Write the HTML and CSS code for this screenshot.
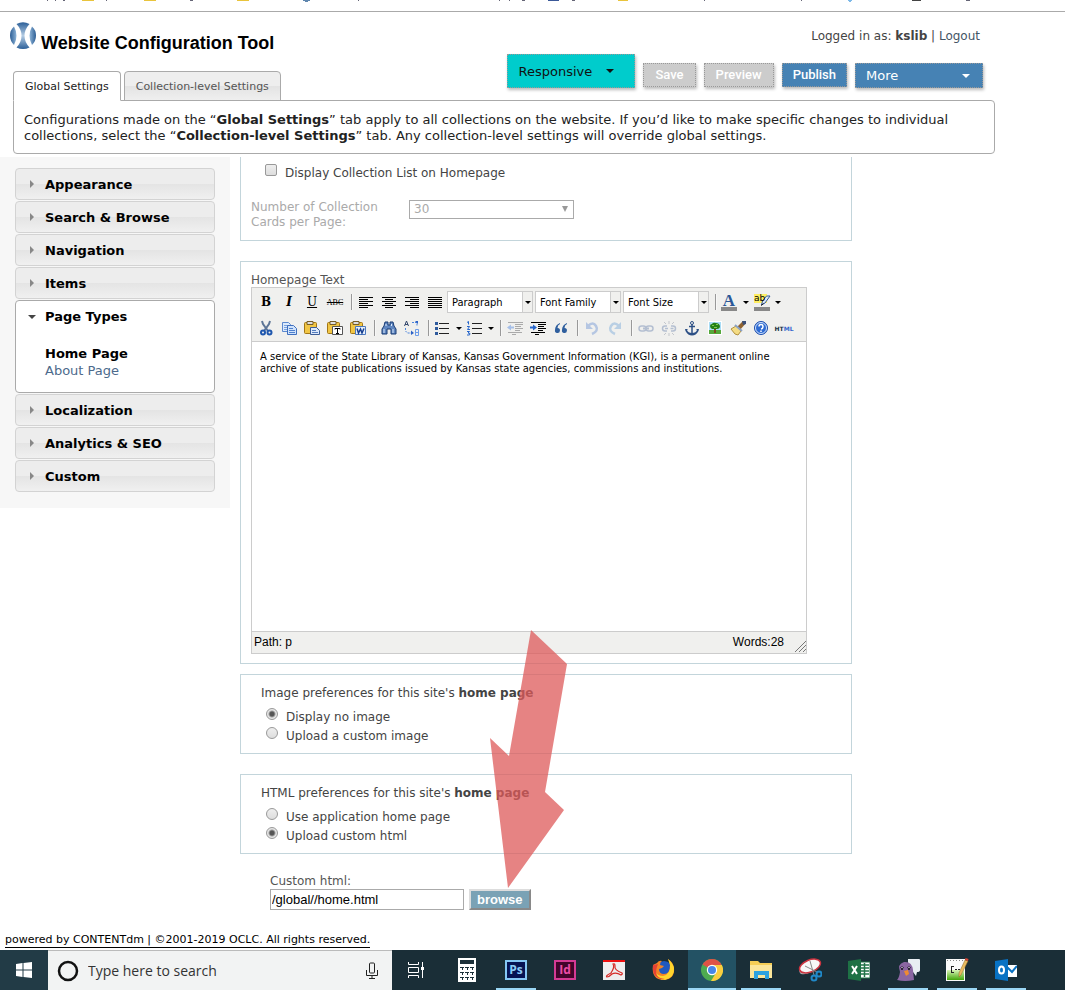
FILE: index.html
```html
<!DOCTYPE html>
<html lang="en">
<head>
<meta charset="utf-8">
<title>Website Configuration Tool</title>
<link rel="stylesheet" href="styles.css">
</head>
<body>
<div class="bookmarks">
  <svg width="1065" height="2" aria-hidden="true">
    <path d="M47 0h1v1h-1zM55 0h1v1h-1zM63 0h2v1h-2zM106 0h1v1h-1zM190 0h3v1h-3zM358 0h1v1h-1zM499 0h1v1h-1zM509 0h1v1h-1zM522 0h3v1h-3zM572 0h3v1h-3zM704 0h1v1h-1zM801 0h1v1h-1zM966 0h4v1h-4z" fill="#667"/>
    <path d="M82 0h12v1h-12zM144 0h12v1h-12zM237 0h12v1h-12zM618 0h10v1h-10z" fill="#e9c43c"/>
    <path d="M303 0h7v1h-2v1h-3v-1h-2z" fill="#5f86ae"/>
    <path d="M548 0h11v1h-11z" fill="#3b5998"/>
    <path d="M848 0h4v1h-1v1h-2v-1h-1z" fill="#7db9e8"/>
    <path d="M912 0h9v1h-9z" fill="#444"/>
  </svg>
</div>

<header class="header">
  <div class="brand-col">
    <div class="brand">
      <svg class="logo" width="26" height="28" viewBox="0 0 26 28" aria-hidden="true">
        <defs><linearGradient id="lg" x1="0" x2="1"><stop offset="0" stop-color="#2c5d94"/><stop offset="1" stop-color="#8db4d8"/></linearGradient>
        <linearGradient id="lg2" x1="1" x2="0"><stop offset="0" stop-color="#2c5d94"/><stop offset="1" stop-color="#8db4d8"/></linearGradient>
        <linearGradient id="lg3" x1="0" x2="0" y1="0" y2="1"><stop offset="0" stop-color="#2c6099"/><stop offset=".5" stop-color="#b5cde4"/><stop offset="1" stop-color="#2c6099"/></linearGradient></defs>
        <path d="M4 4.500Q0 8 0 13.500T4 23Q6.500 18.500 6.500 13.700T4 4.500z" fill="url(#lg)"/>
        <path d="M22 4.500Q26 8 26 13.500T22 23Q19.500 18.500 19.500 13.700T22 4.500z" fill="url(#lg2)"/>
        <path d="M6.500 2Q13-1.300 19.500 2Q14.500 7.500 14.500 13.700T19.500 25.500Q13 28.500 6.500 25.500Q11.500 20 11.500 13.700T6.500 2z" fill="url(#lg3)"/>
      </svg>
      <h1 class="title">Website Configuration Tool</h1>
    </div>
    <nav class="tabs">
      <a class="tab tab-active" href="#global">Global Settings</a>
      <a class="tab" href="#collection">Collection-level Settings</a>
    </nav>
  </div>
  <div class="tools">
    <div class="login">Logged in as: <b>kslib</b> | <a href="#logout">Logout</a></div>
    <div class="actions">
      <button class="menu-btn menu-theme" type="button">Responsive<i class="caret"></i></button>
      <button class="act" type="button" disabled>Save</button>
      <button class="act" type="button" disabled>Preview</button>
      <button class="act act-on" type="button">Publish</button>
      <button class="menu-btn menu-more" type="button">More<i class="caret"></i></button>
    </div>
  </div>
</header>
<p class="notice">Configurations made on the “<b>Global Settings</b>” tab apply to all collections on the website. If you’d like to make specific changes to individual collections, select the “<b>Collection-level Settings</b>” tab. Any collection-level settings will override global settings.</p>

<div class="columns">
  <nav class="side">
    <a class="acc" href="#appearance">Appearance</a>
    <a class="acc" href="#search">Search &amp; Browse</a>
    <a class="acc" href="#navigation">Navigation</a>
    <a class="acc" href="#items">Items</a>
    <div class="acc-open">
      <a class="acc-head" href="#types">Page Types</a>
      <a class="sub sub-current" href="#home">Home Page</a>
      <a class="sub" href="#about">About Page</a>
    </div>
    <a class="acc" href="#localization">Localization</a>
    <a class="acc" href="#analytics">Analytics &amp; SEO</a>
    <a class="acc" href="#custom">Custom</a>
  </nav>

  <main class="content">
    <section class="box box-list">
      <label class="choice"><input class="check" type="checkbox"><span>Display Collection List on Homepage</span></label>
      <div class="cards">
        <label class="cards-label" for="cards">Number of Collection Cards per Page:</label>
        <span class="cards-wrap"><select class="cards-select" id="cards" disabled><option>30</option></select></span>
      </div>
    </section>

    <section class="box box-editor">
      <label class="box-label" for="hometext">Homepage Text</label>
      <div class="editor">
        <div class="toolbar">
          <div class="row">
            <button class="tb serif tb-b" type="button">B</button>
            <button class="tb serif tb-i" type="button">I</button>
            <button class="tb serif tb-u" type="button">U</button>
            <button class="tb serif tb-s" type="button">ABC</button>
            <i class="sep"></i>
            <button class="tb" type="button" aria-label="Align left"><svg width="16" height="16"><path d="M1 3.500h14M1 5.500h9M1 7.500h14M1 9.500h9M1 11.500h14M1 13.500h9" stroke="#000"/></svg></button>
            <button class="tb" type="button" aria-label="Align center"><svg width="16" height="16"><path d="M1 3.500h14M4 5.500h8M1 7.500h14M4 9.500h8M1 11.500h14M4 13.500h8" stroke="#000"/></svg></button>
            <button class="tb" type="button" aria-label="Align right"><svg width="16" height="16"><path d="M1 3.500h14M6 5.500h9M1 7.500h14M6 9.500h9M1 11.500h14M6 13.500h9" stroke="#000"/></svg></button>
            <button class="tb" type="button" aria-label="Justify"><svg width="16" height="16"><path d="M1 3.500h14M1 5.500h14M1 7.500h14M1 9.500h14M1 11.500h14M1 13.500h14" stroke="#000"/></svg></button>
            <span class="pick"><select aria-label="Format"><option>Paragraph</option></select></span>
            <span class="pick"><select aria-label="Font family"><option>Font Family</option></select></span>
            <span class="pick"><select aria-label="Font size"><option>Font Size</option></select></span>
            <i class="sep"></i>
            <button class="tb split serif tb-color" type="button" aria-label="Text color"><span>A</span></button>
            <button class="tb split" type="button" aria-label="Highlight color"><svg width="18" height="20"><path d="M1 2h13v9H1z" fill="#ffee62"/><path d="M8.500 13l1-4 4-5h3.500l-5 7z" fill="#dfe8f5" stroke="#345a9a"/><path d="M8 13.500l2.500-2" stroke="#111"/><path d="M1 15h16v4H1z" fill="#888"/><text x="1" y="9" font-family="DejaVu Sans" font-size="9" fill="#000">ab</text></svg></button>
          </div>
          <div class="row">
            <button class="tb" type="button" aria-label="Cut"><svg width="16" height="16"><path d="M4 1l1 3 5 7M12 1l-1 3-5 7" stroke="#5d7596" stroke-width="2" fill="none"/><circle cx="5" cy="12.500" r="2" fill="none" stroke="#1f57ae" stroke-width="2"/><circle cx="11.500" cy="12.500" r="2" fill="none" stroke="#1f57ae" stroke-width="2"/></svg></button>
            <button class="tb" type="button" aria-label="Copy"><svg width="16" height="16"><path d="M1.500 2.500h6l2 2v7h-8z" fill="#dceafb" stroke="#5b88cf"/><path d="M3 5.500h4M3 7.500h4M3 9.500h4" stroke="#7aa2df"/><path d="M6.500 5.500h6l3 3v6h-9z" fill="#cfe2fb" stroke="#3f6fbe"/><path d="M8 8.500h4M8 10.500h6M8 12.500h6" stroke="#4f80cd"/></svg></button>
            <button class="tb" type="button" aria-label="Paste"><svg width="16" height="16"><rect x=".5" y="2.500" width="12" height="11" rx="1" fill="#f1c645" stroke="#a27616"/><path d="M3 1.500h6v3H3z" fill="#ddd" stroke="#775d26"/><path d="M6.500 7.500h6l3 3v4h-9z" fill="#dce9fb" stroke="#3c5d97"/><path d="M8 10.500h4M8 12.500h6" stroke="#557dbe"/></svg></button>
            <button class="tb" type="button" aria-label="Paste as text"><svg width="16" height="16"><rect x=".5" y="2.500" width="12" height="11" rx="1" fill="#f1c645" stroke="#a27616"/><path d="M3 1.500h6v3H3z" fill="#ddd" stroke="#775d26"/><path d="M5.500 6.500h10v8h-10z" fill="#fff" stroke="#555"/><path d="M8 9.500V8.500h5v1M10.500 8.500v5M9 13.500h3" stroke="#000" fill="none"/></svg></button>
            <button class="tb" type="button" aria-label="Paste from Word"><svg width="16" height="16"><rect x=".5" y="2.500" width="12" height="11" rx="1" fill="#f1c645" stroke="#a27616"/><path d="M3 1.500h6v3H3z" fill="#ddd" stroke="#775d26"/><path d="M5.500 6.500h10v8h-10z" fill="#e6effb" stroke="#4c79bd"/><path d="M7 8.500l1.500 4.500 2-4 1.500 4 2-4.500" stroke="#173f91" stroke-width="1.500" fill="none"/></svg></button>
            <i class="sep"></i>
            <button class="tb" type="button" aria-label="Find"><svg width="16" height="16"><path d="M4 2h3v3h2V2h3l1 4 2 3v5h-5V9H6v5H1V9l2-3z" fill="#5f86c0" stroke="#183a73"/><path d="M3 9v4M12 9v4M5 4v2M10.500 4v2" stroke="#dbe8fa"/></svg></button>
            <button class="tb" type="button" aria-label="Replace"><svg width="18" height="16"><path d="M1.500 6l2-5 2 5M2 4.500h3" stroke="#34486d" fill="none"/><path d="M2.500 8v3l2 2h4M9 2.500h5v4" stroke="#4e86dd" fill="none" stroke-dasharray="2 1"/><path d="M8 10.500l3 2.500-3 2zM12 1h3v3z" fill="#2c62c6"/><path d="M12.500 9.500h3v6h-3zM12.500 12.500h3" stroke="#6d9ce8" fill="none"/></svg></button>
            <i class="sep"></i>
            <button class="tb split" type="button" aria-label="Bulleted list"><svg width="16" height="16"><path d="M5 3.500h10M5 8.500h10M5 13.500h10" stroke="#222"/><path d="M1 2h3v3H1zM1 7h3v3H1zM1 12h3v3H1z" fill="#2e5a9c"/></svg></button>
            <button class="tb split" type="button" aria-label="Numbered list"><svg width="16" height="16"><path d="M6 3.500h10M6 8.500h10M6 13.500h10" stroke="#222"/><path d="M1 2.500l1.500-1v3M1 6.500h2.500l-2 3H4M1 11.500h2.500l-1.500 1.500 2 .5-.5 1.500H1" stroke="#2766cb" fill="none"/></svg></button>
            <i class="sep"></i>
            <button class="tb" type="button" aria-label="Outdent" disabled><svg width="16" height="16"><path d="M1 2.500h15M8 4.500h8M8 6.500h6M8 8.500h8M8 10.500h5M1 12.500h14M5 14.500h4" stroke="#aaa"/><path d="M0 7.500l4-3v2h3v2H4v2z" fill="#a6bfe8"/></svg></button>
            <button class="tb" type="button" aria-label="Indent"><svg width="16" height="16"><path d="M1 2.500h15M8 4.500h8M8 6.500h6M8 8.500h8M8 10.500h5M1 12.500h14M5 14.500h4" stroke="#000"/><path d="M7 7.500l-4-3v2H0v2h3v2z" fill="#2766cb"/></svg></button>
            <button class="tb" type="button" aria-label="Blockquote"><svg width="16" height="16"><path d="M7 3Q2 5 2 10a2.500 2.500 0 1 0 2.500-2Q4.500 5 7 4zM14 3Q9 5 9 10a2.500 2.500 0 1 0 2.500-2Q11.500 5 14 4z" fill="#2f5f9e"/></svg></button>
            <i class="sep"></i>
            <button class="tb" type="button" aria-label="Undo" disabled><svg width="16" height="16"><path d="M4 6Q9 1 12 6T8 14" stroke="#b5c6e2" stroke-width="2.500" fill="none"/><path d="M2 2v7h7z" fill="#b5c6e2"/></svg></button>
            <button class="tb" type="button" aria-label="Redo" disabled><svg width="16" height="16"><path d="M12 6Q7 1 4 6T8 14" stroke="#b9cfe4" stroke-width="2.500" fill="none"/><path d="M14 2v7H7z" fill="#b9cfe4"/></svg></button>
            <i class="sep"></i>
            <button class="tb" type="button" aria-label="Link" disabled><svg width="16" height="16"><rect x="1" y="6" width="7" height="5" rx="2.500" fill="none" stroke="#b4bfd1" stroke-width="1.500"/><rect x="8" y="6" width="7" height="5" rx="2.500" fill="none" stroke="#b4bfd1" stroke-width="1.500"/><path d="M5 8.500h6" stroke="#b4bfd1" stroke-width="2"/></svg></button>
            <button class="tb" type="button" aria-label="Unlink" disabled><svg width="16" height="16"><path d="M6 6H4a2.500 2.500 0 0 0 0 5h2M10 6h2a2.500 2.500 0 0 1 0 5h-2M4 8.500h3M9.500 8.500h3" stroke="#b4bfd1" stroke-width="1.500" fill="none"/><path d="M3 2l2 2M8 1v3M13 2l-2 2M3 15l2-2M8 16v-3M13 15l-2-2" stroke="#c3c6cc"/></svg></button>
            <button class="tb" type="button" aria-label="Anchor"><svg width="16" height="16"><circle cx="8" cy="3" r="1.500" fill="none" stroke="#2c4f85"/><path d="M8 4v10M5 6.500h6" stroke="#2c4f85" stroke-width="1.500"/><path d="M1 9l3 0-1 1q1 3 5 3t5-3l-1-1h3l-.5 2Q12 15.500 8 15.500T1.500 11z" fill="#2c4f85"/></svg></button>
            <button class="tb" type="button" aria-label="Image"><svg width="16" height="16"><path d="M1 1h14v14H1z" fill="#fff"/><path d="M2 2h12v9H2z" fill="#a9dcf5"/><path d="M2 10h12v4H2z" fill="#55a83b"/><path d="M7 8h2v5H7z" fill="#7c4a1d"/><path d="M3 6q0-2 2-2 1-2 4-1 3 0 4 3 0 3-3 3H5Q3 8 3 6z" fill="#238117"/><path d="M5 5h2v1H5zM9 4h2v1H9zM7 7h3v1H7z" fill="#82ca4a"/></svg></button>
            <button class="tb" type="button" aria-label="Cleanup"><svg width="16" height="16"><path d="M13 1l3 2-6 7-3-3z" fill="#8f6330"/><path d="M12 1h4v3l-3 1z" fill="#394f78"/><path d="M6 6l5 5-3 4-3-1-4-5z" fill="#f4dc84" stroke="#b2913e"/><path d="M5 5l7 6" stroke="#8aa1c4" stroke-width="2"/></svg></button>
            <button class="tb" type="button" aria-label="Help"><svg width="16" height="16"><circle cx="8" cy="8" r="6.500" fill="#2e6bd3" stroke="#1f4fac"/><circle cx="8" cy="8" r="5.500" fill="none" stroke="#cfe0fa"/><path d="M6 6.500Q6 4.500 8 4.500t2 2T8 9M8 10.500V12" stroke="#fff" stroke-width="1.500" fill="none"/></svg></button>
            <button class="tb tb-html" type="button">HT<span>ML</span></button>
          </div>
        </div>
        <textarea class="editor-text" id="hometext">A service of the State Library of Kansas, Kansas Government Information (KGI), is a permanent online archive of state publications issued by Kansas state agencies, commissions and institutions.</textarea>
        <div class="status"><span>Path: p</span><span class="words">Words:28</span><svg width="12" height="12" aria-hidden="true"><path d="M1 12L12 1M5 12l7-7M9 12l3-3" stroke="#777"/></svg></div>
      </div>
    </section>

    <section class="box box-pref">
      <p class="pref-title">Image preferences for this site's <b>home page</b></p>
      <label class="choice"><input class="radio" type="radio" name="img" checked><span>Display no image</span></label>
      <label class="choice"><input class="radio" type="radio" name="img"><span>Upload a custom image</span></label>
    </section>
    <section class="box box-pref box-html">
      <p class="pref-title">HTML preferences for this site's <b>home page</b></p>
      <label class="choice"><input class="radio" type="radio" name="html"><span>Use application home page</span></label>
      <label class="choice"><input class="radio" type="radio" name="html" checked><span>Upload custom html</span></label>
    </section>
    <div class="upload">
      <label for="path">Custom html:</label>
      <div class="upload-row"><input class="path" id="path" type="text" value="/global//home.html"><button class="browse" type="button">browse</button></div>
    </div>
    <svg class="arrow" width="78" height="258" viewBox="0 0 78 258" aria-hidden="true"><path d="M41 0L77 34 55 162 74 180 18 258 0 108 19 126z" fill="#de5a5a" fill-opacity=".75"/></svg>
  </main>
</div>

<footer class="foot"><a href="#contentdm">powered by CONTENTdm | ©2001-2019 OCLC. All rights reserved.</a></footer>

<div class="taskbar">
  <button class="start" type="button" aria-label="Start"><svg width="16" height="16"><path d="M0 2l6.500-1v6.500H0zM7.500 1L16 0v7.500H7.500zM0 8.500h6.500V15L0 14zM7.500 8.500H16V16l-8.500-1z" fill="#fff"/></svg></button>
  <div class="search">
    <svg width="22" height="22"><circle cx="11" cy="11" r="9" fill="none" stroke="#111" stroke-width="2.500"/></svg>
    <input class="search-text" type="text" placeholder="Type here to search" aria-label="Type here to search">
    <svg width="12" height="17"><rect x="3.500" y="1" width="5" height="10" rx="1" fill="none" stroke="#222"/><path d="M.5 8v5.500h11V8M6 13.500v3M3 16.500h6" stroke="#222" fill="none"/></svg>
  </div>
  <button class="app app-view" type="button" aria-label="Task view"><svg width="18" height="16"><path d="M1.500 0v2.500h10V0M1.500 16v-2.500h10V16M1.500 5.500h10v5h-10zM15.500 0v16" stroke="#fff" fill="none"/><path d="M14 5h3v3h-3z" fill="#fff"/></svg></button>
  <button class="app" type="button" aria-label="Calculator"><svg width="18" height="24"><path d="M0 0h18v24H0z" fill="#fff"/><path d="M2 2h14v4H2z" fill="#1b3039"/><path d="M2 9h4v1H5v2H4v-2H2zM7 9h4v1h-1v2H9v-2H7zM12 9h4v1h-1v2h-1v-2h-2zM2 14h4v1H5v2H4v-2H2zM7 14h4v1h-1v2H9v-2H7zM12 14h4v1h-1v2h-1v-2h-2zM2 19h4v1H5v2H4v-2H2zM7 19h4v1h-1v2H9v-2H7zM12 19h4v1h-1v2h-1v-2h-2z" fill="#1b3039"/></svg></button>
  <button class="app app-run" type="button" aria-label="Photoshop"><svg width="22" height="20"><path d="M1 1h20v18H1z" fill="#061353" stroke="#85c7f4" stroke-width="2"/><text x="11" y="14" text-anchor="middle" font-family="Open Sans" font-weight="700" font-size="12" fill="#8bcbf7">Ps</text></svg></button>
  <button class="app" type="button" aria-label="InDesign"><svg width="22" height="20"><path d="M1 1h20v18H1z" fill="#43042b" stroke="#d53a94" stroke-width="2"/><text x="11" y="14" text-anchor="middle" font-family="Open Sans" font-weight="700" font-size="12" fill="#ed4ba6">Id</text></svg></button>
  <button class="app" type="button" aria-label="Acrobat"><svg width="22" height="20"><path d="M0 0h22v20H0z" fill="#eee"/><path d="M0 0h22v2H0z" fill="#ed1010"/><path d="M4 17q-2-1 4-4 4-6 2-9 2-1 2 2-1 4 7 7 1 1-1 2-5-3-9-1-3 3-5 3z" fill="none" stroke="#d52b27" stroke-width="1.200"/></svg></button>
  <button class="app" type="button" aria-label="Firefox"><svg width="24" height="24"><circle cx="13" cy="12" r="9" fill="#2159bf"/><path d="M2 7q-2 15 11 15 11-1 10-12-1-6-6-9 2 3 2 6 0 9-6 9-5 0-5-5l3-1 2-2-4-1q0-3 2-4-3-1-5 2z" fill="#f38426"/><path d="M17 1q1 3 2 6 1 9-7 11-5 0-8-4 2 8 10 8 10-3 9-12-1-5-6-9z" fill="#ffd52d"/><path d="M2 7q-1 9 4 12 3 3 8 2-13-1-7-15z" fill="#e64135"/></svg></button>
  <button class="app app-active" type="button" aria-label="Chrome"><svg width="22" height="22"><circle cx="11" cy="11" r="11" fill="#4eaa50"/><path d="M11 11L1.500 5.500A11 11 0 0 1 20.500 5.500z" fill="#de5246"/><path d="M11 6h9.800A11 11 0 0 1 10 22l5.500-9z" fill="#f9cd3f"/><circle cx="11" cy="11" r="5.200" fill="#fff"/><circle cx="11" cy="11" r="4" fill="#4786e8"/></svg></button>
  <button class="app app-run" type="button" aria-label="File Explorer"><svg width="22" height="20"><path d="M0 1h8l2 2h12v15H0z" fill="#f5cd56"/><path d="M0 5h22v13H0z" fill="#fbe59a"/><path d="M4 11h15v8h-4v-4H8v4H4z" fill="#2da2df"/></svg></button>
  <button class="app" type="button" aria-label="Snipping Tool"><svg width="24" height="24"><path d="M1 10q0 5 2 6 5 1 10-2l7-6V5z" fill="#aaa"/><ellipse cx="12" cy="8" rx="11" ry="6" transform="rotate(-22 12 8)" fill="#f7f7f7" stroke="#cc3440" stroke-width="1.500"/><path d="M12 3l4 14M7 8l12 6" stroke="#888"/><circle cx="16" cy="20" r="2.500" fill="none" stroke="#2089c9" stroke-width="2"/><circle cx="21" cy="16" r="2.500" fill="none" stroke="#2089c9" stroke-width="2"/></svg></button>
  <button class="app" type="button" aria-label="Excel"><svg width="22" height="22"><path d="M10 3h12v16H10z" fill="#fff" stroke="#207347"/><path d="M12 6h9M12 9h9M12 12h9M12 15h9M16.500 4v14" stroke="#207347" stroke-width="1.500"/><path d="M0 2l13-2v22L0 20z" fill="#1e7145"/><path d="M4 7l5 8M9 7l-5 8" stroke="#fff" stroke-width="2"/></svg></button>
  <button class="app app-run" type="button" aria-label="Pidgin"><svg width="24" height="24"><path d="M12 1h11q1 0 1 1v10q0 2-3 2l-1 4-3-4h-5z" fill="#e8edf2"/><path d="M1 22q2-2 3-8-3-8 4-10 8-1 9 8l1 10q-9 2-17 0z" fill="#8a66a2"/><path d="M4 10q2-3 4 0M11 10q2-3 4 0" fill="#ddd" stroke="#35204a"/><circle cx="6" cy="11" r="1" fill="#111"/><circle cx="13" cy="11" r="1" fill="#111"/><path d="M8 13l4-1 1 4-3 2z" fill="#ef8b32"/></svg></button>
  <button class="app app-run" type="button" aria-label="Notepad"><svg width="24" height="24"><defs><linearGradient id="np" x1="0" x2="0" y1="0" y2="1"><stop offset="0" stop-color="#d9f5b8"/><stop offset="1" stop-color="#43a70a"/></linearGradient></defs><path d="M1 1h19v22H1z" fill="#fafafa"/><path d="M2 12h17v10H2z" fill="url(#np)"/><path d="M2 2.500h17" stroke="#888" stroke-dasharray="1 2"/><path d="M6.500 8v7M6 8.500h3M6 14.500h3M10 11.500h2M13 11.500h2" stroke="#222"/><path d="M20 2l3 1-7 14-2 2v-4z" fill="#e9bb60" stroke="#936b2a" stroke-width=".5"/><path d="M20.500 0l3 1-.5 2-3-1z" fill="#d84736"/></svg></button>
  <button class="app app-run" type="button" aria-label="Outlook"><svg width="22" height="22"><path d="M12 6h10v12H12z" fill="#fff"/><path d="M12 8l5 5 5-6" stroke="#0872c4" stroke-width="2" fill="none"/><path d="M0 2l13-2v22L0 20z" fill="#0872c4"/><ellipse cx="6.500" cy="11" rx="2.500" ry="3.500" stroke="#fff" stroke-width="2" fill="none"/></svg></button>
</div>
</body>
</html>
```
FILE: styles.css
```css
* { box-sizing: border-box; }
body {
  margin: 0;
  min-height: 100vh;
  display: flex;
  flex-direction: column;
  background: #fff;
  color: #444;
  font-family: "DejaVu Sans", Verdana, sans-serif;
  font-size: 12px;
  line-height: 15px;
}
a { color: inherit; text-decoration: none; }
button, input, select, textarea { font: inherit; margin: 0; }
p { margin: 0; }
svg { display: block; flex: none; }

.bookmarks { height: 12px; overflow: hidden; border-bottom: 1px solid #aaa; }

.header {
  display: flex;
  justify-content: space-between;
  height: 89px;
  padding: 0 82px 0 13px;
}
.brand-col { display: flex; flex-direction: column; justify-content: space-between; }
.brand { display: flex; gap: 5px; padding-top: 10px; margin-left: -3px; }
.title {
  margin: 10px 0 0;
  color: #000;
  font: bold 18px/22px "Liberation Sans", Arial, sans-serif;
}
.tabs { display: flex; gap: 3px; align-items: flex-end; position: relative; }
.tab {
  height: 30px;
  padding: 7px 11px;
  border: 1px solid #aaa;
  border-radius: 4px 4px 0 0;
  background: linear-gradient(#eee 50%, #e3e3e3 50%, #efefef);
  color: #555;
  font-size: 11px;
}
.tab-active { border-bottom-color: #fff; background: #fff; color: #222; }

.tools { display: flex; flex-direction: column; justify-content: space-between; padding: 17px 0 13px; }
.login { padding-right: 3px; text-align: right; color: #444; }
.login a { color: #456; }
.actions { display: flex; gap: 8px; align-items: flex-end; }
.act, .menu-btn {
  border: 1px dotted #999;
  box-shadow: 1px 2px 3px #bbb;
  color: #fff;
}
.act {
  height: 24px;
  margin-bottom: 1px;
  padding: 0 10px;
  background: #ccc;
  font: 500 13px/20px Roboto, "Liberation Sans", sans-serif;
}
.act:disabled { padding: 0 11px; }
.act-on, .menu-more { background: #4682b4; }
.menu-btn {
  display: flex;
  justify-content: space-between;
  align-items: center;
  width: 128px;
  height: 25px;
  padding: 0 12px 0 10px;
  font-size: 13px;
}
.menu-theme { height: 34px; padding-right: 20px; background: #00cccc; color: #111; }
.caret { border: 4px solid transparent; border-top-color: currentColor; border-bottom: 0; }

.notice {
  margin: -1px 70px 0 13px;
  padding: 11px 10px 9px;
  border: 1px solid #aaa;
  border-radius: 0 4px 4px 4px;
  background: #fff;
  color: #222;
  font-size: 13px;
  line-height: 16px;
}

.columns { display: flex; align-items: flex-start; gap: 10px; padding-top: 3px; }
.side {
  display: flex;
  flex-direction: column;
  gap: 1px;
  flex: none;
  width: 230px;
  padding: 11px 15px 16px;
  background: #f7f7f7;
  color: #000;
  font-size: 13px;
  font-weight: bold;
}
.acc {
  display: flex;
  align-items: center;
  height: 32px;
  padding-left: 14px;
  border: 1px solid #d3d3d3;
  border-radius: 4px;
  background: linear-gradient(#ededed 50%, #e4e4e4 50%, #f0f0f0);
}
.acc::before {
  content: "";
  margin-right: 11px;
  border: 4px solid transparent;
  border-left-color: #888;
  border-right: 0;
}
.acc-open {
  display: flex;
  flex-direction: column;
  padding: 7px 12px 13px;
  border: 1px solid #aaa;
  border-radius: 4px;
  background: #fff;
}
.acc-head { display: flex; align-items: center; gap: 9px; height: 17px; margin-bottom: 20px; }
.acc-head::before { content: ""; border: 4px solid transparent; border-top-color: #444; border-bottom: 0; }
.sub { margin-left: 17px; line-height: 17px; font-weight: normal; color: #4c6a8c; }
.sub-current { font-weight: bold; color: #000; }

.content { position: relative; flex: 0 1 612px; min-width: 0; }
.box { border: 1px solid #c3d5db; padding: 0 10px; }
.box-list { border-top: 0; height: 84px; padding-top: 6px; }
.choice { display: flex; align-items: flex-start; gap: 8px; width: fit-content; margin-left: 14px; }
.choice span { padding-top: 2px; line-height: 17px; }
.check, .radio {
  appearance: none;
  flex: none;
  width: 12px;
  height: 12px;
  margin-top: 1px;
  border: 1px solid #999;
  background: linear-gradient(#eee, #ddd);
}
.check { border-radius: 2px; }
.radio { border-radius: 50%; }
.radio:checked { background: radial-gradient(circle, #555 2px, #e6e6e6 4px); }
.cards { display: flex; gap: 18px; margin-top: 18px; color: #aaa; }
.cards-label { width: 140px; }
.cards-wrap, .pick { position: relative; display: block; }
.cards-select {
  display: block;
  width: 165px;
  height: 19px;
  padding: 0 4px;
  appearance: none;
  border: 1px solid #aaa;
  border-radius: 0;
  background: #fff;
  color: #aaa;
  opacity: 1;
}
.cards-wrap::after { content: ""; position: absolute; right: 6px; top: 6px; border: 3px solid transparent; border-top: 6px solid #999; border-bottom: 0; }

.box-editor { margin-top: 20px; padding: 11px 10px 9px; }
.box-label { display: block; color: #555; line-height: 14px; }
.editor { width: 556px; max-width: 100%; border: 1px solid #ccc; }
.toolbar { padding: 1px 3px 0; background: #f0f0ee; border-bottom: 1px solid #ccc; }
.row { display: flex; align-items: center; height: 26px; }
.tb {
  display: flex;
  align-items: center;
  justify-content: center;
  flex: none;
  width: 23px;
  height: 22px;
  padding: 0 1px 0 0;
  border: 0;
  background: none;
  color: #000;
}
.serif { font-family: "DejaVu Serif", "Liberation Serif", serif; font-size: 12px; }
.tb-b { font-weight: 900; }
.tb-i { font-style: italic; font-weight: bold; }
.tb-u { text-decoration: underline; }
.tb-s { font-size: 8px; text-decoration: line-through; font-family: "Liberation Serif", serif; }
.sep { flex: none; width: 8px; height: 16px; background: linear-gradient(90deg, transparent 4px, #999 4px, #999 5px, #fff 5px, transparent 6px); }
.split { width: 32px; justify-content: space-between; padding: 0 2px; }
.split::after { content: ""; border: 3px solid transparent; border-top-color: #000; border-bottom: 0; }
.tb-color span {
  display: block;
  width: 16px;
  height: 18px;
  border-bottom: 4px solid #888;
  color: #2b5797;
  font-family: "Liberation Serif", serif;
  font-size: 17px;
  font-weight: bold;
}
.tb-html { color: #234; font: bold 6px "DejaVu Sans", sans-serif; }
.tb-html span { color: #36c; }
.pick { width: 86px; margin-right: 2px; flex: none; }
.pick select {
  display: block;
  width: 100%;
  height: 22px;
  padding: 0 4px;
  appearance: none;
  border: 1px solid #ccc;
  border-radius: 0;
  background: linear-gradient(90deg, #fff 74px, #ccc 74px, #ccc 75px, #f0f0ee 75px);
  color: #000;
  font: 11px "DejaVu Sans Condensed", "Noto Sans", sans-serif;
}
.pick::after { content: ""; position: absolute; right: 2px; top: 10px; border: 3px solid transparent; border-top-color: #000; border-bottom: 0; }
.editor-text {
  display: block;
  width: 100%;
  height: 289px;
  padding: 9px 8px;
  border: 0;
  outline: 0;
  resize: none;
  color: #000;
  font-size: 10px;
  line-height: 12px;
}
.status {
  display: flex;
  align-items: center;
  height: 22px;
  padding: 0 0 1px 2px;
  border-top: 1px solid #ccc;
  background: #f0f0ee;
  color: #000;
  font: 12px "Liberation Sans", Arial, sans-serif;
}
.words { margin-left: auto; padding-right: 10px; }
.status svg { align-self: flex-end; }

.box-pref { height: 80px; margin-top: 10px; padding: 11px 20px; }
.box-html { margin-top: 20px; }
.pref-title { margin-bottom: 6px; }
.box-pref .choice { margin-left: 5px; height: 19px; }
.upload { margin: 20px 0 0 30px; color: #555; }
.upload-row { display: flex; align-items: flex-start; gap: 5px; }
.path {
  width: 194px;
  height: 21px;
  padding: 0 1px;
  border: 1px solid #aaa;
  color: #000;
  font: 13px "Liberation Sans", Arial, sans-serif;
}
.browse {
  height: 21px;
  padding: 0 6px;
  border: 2px outset #ddd;
  background: #7aa2b5;
  color: #fff;
  font: bold 13px "Liberation Sans", Arial, sans-serif;
}
.arrow { position: absolute; left: 250px; top: 473px; pointer-events: none; }

.foot { margin-top: auto; padding: 0 5px 2px; color: #000; font-size: 11px; line-height: 14px; }
.foot a { display: inline-block; border-bottom: 1px solid #000; }

.taskbar { display: flex; gap: 1px; height: 40px; background: #1a2e37; }
.start { display: flex; align-items: center; justify-content: center; width: 48px; margin-right: -1px; border: 0; background: #223b46; }
.search { display: flex; align-items: center; flex: 0 1 344px; margin-right: -1px; padding: 0 14px 0 9px; background: #f2f3f3; border-top: 1px solid #bbb; }
.search-text {
  flex: 1;
  min-width: 0;
  padding: 0 9px;
  border: 0;
  background: none;
  font: 14px "Open Sans", "Noto Sans", sans-serif;
}
.search-text::placeholder { color: #333; opacity: 1; }
.app {
  display: flex;
  align-items: center;
  justify-content: center;
  flex: none;
  width: 48px;
  padding: 0;
  border: 0;
  background: none;
}
.app-view { margin-right: 2px; }
.app-run { background: linear-gradient(#9bd7f5, #9bd7f5) bottom / 40px 2px no-repeat; }
.app-active { background: linear-gradient(#9bd7f5, #9bd7f5) bottom / 100% 2px no-repeat #235264; }
```
